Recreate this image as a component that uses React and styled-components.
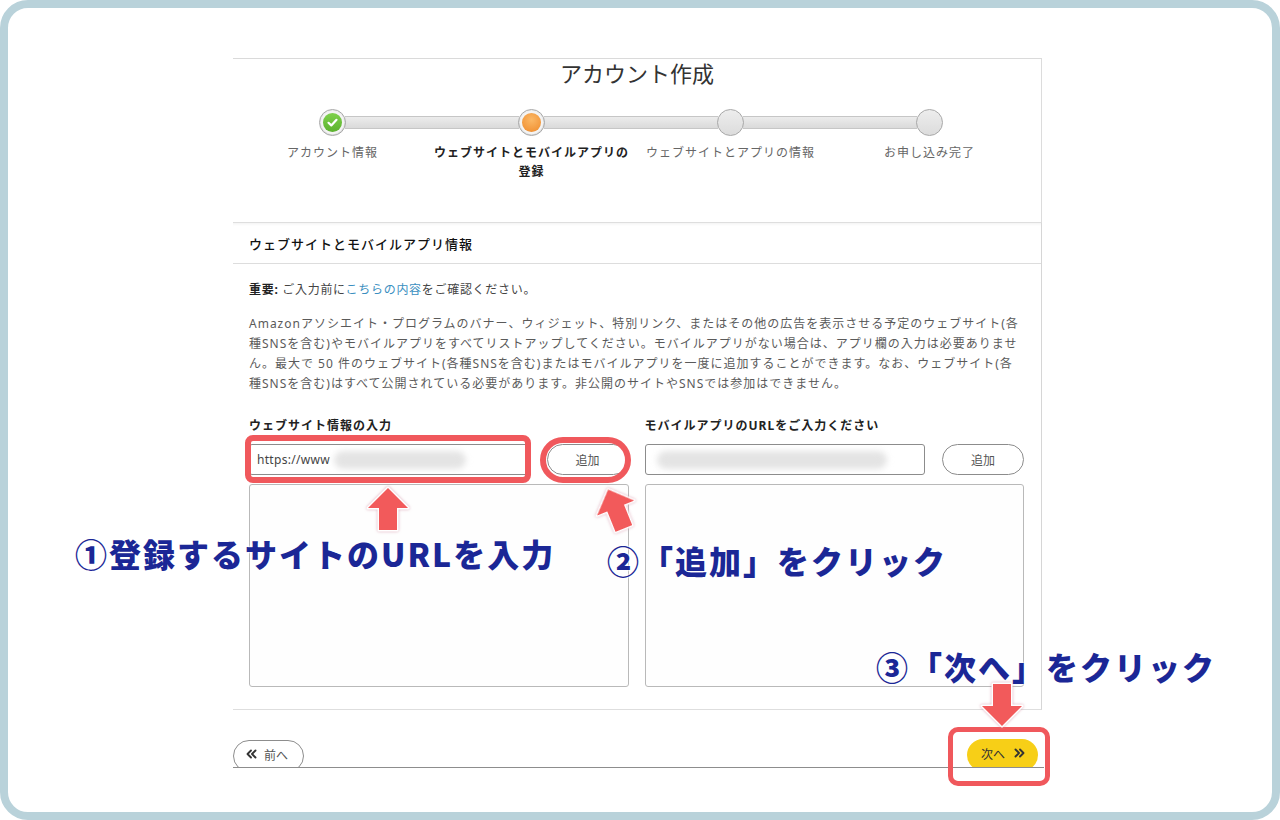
import React from "react";
import styled, { createGlobalStyle } from "styled-components";

const Global = createGlobalStyle`
  html, body { margin: 0; padding: 0; background: #fff; }
  body { font-family: "Noto Sans", "Noto Sans CJK JP", sans-serif; }
  * { box-sizing: border-box; }
`;

const Stage = styled.div`
  position: relative;
  width: 1280px;
  height: 820px;
  overflow: hidden;
`;

const Frame = styled.div`
  width: 1280px;
  height: 820px;
  border: 8px solid #b9d2da;
  border-radius: 28px;
  background: #fff;
  padding: 50px 0 0 225px;
`;

const Page = styled.div`
  width: 809px;
  background: #fff;
`;

const Top = styled.div`
  height: 164px;
  border-top: 1px solid #dadada;
  border-right: 1px solid #dcdcdc;
`;

const Title = styled.h1`
  margin: 0;
  text-align: center;
  font-size: 22px;
  line-height: 26px;
  font-weight: 400;
  color: #333;
  font-family: "Noto Sans CJK JP", sans-serif;
`;

const Stepper = styled.div`
  display: flex;
  align-items: center;
  height: 26px;
  margin-top: 24px;
  padding-left: 86px;
`;

const Circle = styled.span`
  flex: none;
  width: 27px;
  height: 27px;
  border-radius: 50%;
  border: 1px solid #a8a8a8;
  background: linear-gradient(#ededed, #dcdcdc);
  display: flex;
  align-items: center;
  justify-content: center;
  position: relative;
  z-index: 1;
`;

const Dot = styled.span`
  width: 19px;
  height: 19px;
  border-radius: 50%;
  background: ${(p) => p.$color};
  display: flex;
  align-items: center;
  justify-content: center;
  box-shadow: 0 0 0 2px #f4f4f4;
`;

const Track = styled.span`
  flex: none;
  width: 174px;
  height: 13px;
  margin: 0 -1px;
  background: linear-gradient(#ececec, #dadada);
  border-top: 1px solid #c6c6c6;
  border-bottom: 1px solid #c6c6c6;
`;

const Labels = styled.div`
  display: grid;
  grid-template-columns: repeat(4, 199px);
  margin-top: 8px;
  margin-left: 0;
`;

const StepLabel = styled.div`
  text-align: center;
  font-size: 12px;
  line-height: 19px;
  letter-spacing: 1px;
  color: ${(p) => (p.$active ? "#222" : "#666")};
  font-weight: ${(p) => (p.$active ? 700 : 400)};
`;

const Panel = styled.section`
  border-top: 1px solid #dedede;
  border-right: 1px solid #d6d6d6;
  border-bottom: 1px solid #dedede;
`;

const PanelHeader = styled.div`
  height: 41px;
  border-bottom: 1px solid #dddddd;
  display: flex;
  align-items: center;
  padding-left: 16px;
  font-size: 13px;
  letter-spacing: 1px;
  color: #111;
  font-weight: 500;
  box-shadow: inset 0 3px 3px -2px rgba(0, 0, 0, 0.06);
`;

const PanelBody = styled.div`
  padding: 16px 17px 22px 16px;
`;

const Notice = styled.p`
  margin: 0;
  font-size: 12px;
  line-height: 20px;
  letter-spacing: 0.7px;
  color: #444;
  white-space: nowrap;
`;

const Strong = styled.b`
  color: #222;
  font-weight: 700;
`;

const Link = styled.span`
  color: #3b8fbf;
`;

const Para = styled.p`
  margin: 14px 0 0;
  font-size: 12px;
  line-height: 20px;
  letter-spacing: 1px;
  color: #5a5a5a;
  white-space: nowrap;
`;

const Columns = styled.div`
  display: grid;
  grid-template-columns: 1fr 1fr;
  column-gap: 16px;
  margin-top: 22px;
`;

const Column = styled.div`
  display: flex;
  flex-direction: column;
`;

const FieldLabel = styled.div`
  font-size: 12px;
  line-height: 20px;
  font-weight: 700;
  letter-spacing: 1px;
  color: #222;
`;

const InputRow = styled.div`
  display: flex;
  gap: 17px;
  margin-top: 8px;
  height: 31px;
`;

const Input = styled.div`
  flex: 1;
  border: 1px solid #8c8c8c;
  border-radius: 3px;
  display: flex;
  align-items: center;
  padding-left: 7px;
  font-size: 12px;
  color: #444;
  letter-spacing: 0.3px;
  overflow: hidden;
`;

const Blur = styled.span`
  display: block;
  height: 18px;
  width: ${(p) => p.$w}px;
  margin-left: ${(p) => p.$ml}px;
  border-radius: 9px;
  background: #e4e4e4;
  filter: blur(3px);
`;

const AddButton = styled.button`
  flex: none;
  width: 82px;
  height: 31px;
  border: 1px solid #8c8c8c;
  border-radius: 16px;
  background: #fff;
  font-family: "Noto Sans CJK JP", sans-serif;
  font-size: 12px;
  color: #555;
  padding: 0;
`;

const ListBox = styled.div`
  margin-top: 9px;
  height: 203px;
  border: 1px solid #b9b9b9;
  border-radius: 3px;
  background: #fefefe;
`;

const Footer = styled.div`
  height: 58px;
  margin-right: -2px;
  border-bottom: 1px solid #8d8d8d;
  overflow: hidden;
  display: flex;
  justify-content: space-between;
  align-items: flex-start;
  padding: 30px 6px 0 0;
`;

const PrevButton = styled.button`
  width: 71px;
  height: 32px;
  border: 1px solid #8d8d8d;
  border-radius: 16px;
  background: #fff;
  display: flex;
  align-items: center;
  gap: 7px;
  padding: 0 0 4px 12px;
  font-family: "Noto Sans CJK JP", sans-serif;
  font-size: 12px;
  color: #555;
`;

const NextButton = styled.button`
  width: 71px;
  height: 32px;
  margin-top: -1px;
  border: none;
  border-radius: 16px;
  background: #f7cf17;
  display: flex;
  align-items: center;
  gap: 9px;
  padding: 0 0 4px 14px;
  font-family: "Noto Sans CJK JP", sans-serif;
  font-size: 12px;
  color: #333;
`;

const RedBox = styled.div`
  position: absolute;
  left: ${(p) => p.$x}px;
  top: ${(p) => p.$y}px;
  width: ${(p) => p.$w}px;
  height: ${(p) => p.$h}px;
  border: ${(p) => p.$b}px solid #f0585c;
  border-radius: ${(p) => p.$r}px;
`;

const ArrowSvg = styled.svg`
  position: absolute;
  left: ${(p) => p.$x}px;
  top: ${(p) => p.$y}px;
  transform: rotate(${(p) => p.$rot}deg);
  overflow: visible;
  filter: drop-shadow(0 0 1.5px rgba(210, 140, 160, 0.7));
`;

const Note = styled.div`
  position: absolute;
  left: ${(p) => p.$x}px;
  top: ${(p) => p.$y}px;
  font-family: "Noto Sans CJK JP", sans-serif;
  font-size: 32px;
  line-height: 40px;
  font-weight: 900;
  letter-spacing: 2px;
  color: #1b2796;
  white-space: nowrap;
  text-shadow: 0 0 2px #fff, 0 0 2px #fff, 0 0 3px #fff;
`;

const Arrow = ({ x, y, rot }) => (
  <ArrowSvg $x={x} $y={y} $rot={rot} width="44" height="46" viewBox="0 0 44 46">
    <path
      d="M22 2 L42 22 L31 22 L31 44 L13 44 L13 22 L2 22 Z"
      fill="#f25a5b"
      stroke="#fff"
      strokeWidth="3"
      strokeLinejoin="round"
      paintOrder="stroke"
    />
  </ArrowSvg>
);

const DoubleChevron = ({ dir = "left", color = "#333" }) => (
  <svg width="11" height="10" viewBox="0 0 11 10">
    <g fill="none" stroke={color} strokeWidth="1.9" strokeLinecap="round" strokeLinejoin="round"
      transform={dir === "right" ? "translate(11 0) scale(-1 1)" : undefined}>
      <path d="M5 1.5 L1.5 5 L5 8.5" />
      <path d="M9.5 1.5 L6 5 L9.5 8.5" />
    </g>
  </svg>
);

const Check = () => (
  <svg width="13" height="13" viewBox="0 0 13 13">
    <path d="M2.5 6.8 L5.3 9.4 L10.5 3.8" fill="none" stroke="#fff" strokeWidth="2.2"
      strokeLinecap="round" strokeLinejoin="round" />
  </svg>
);

export default function App() {
  return (
    <Stage>
      <Global />
      <Frame>
        <Page>
          <Top>
            <Title>アカウント作成</Title>
            <Stepper>
              <Circle>
                <Dot $color="linear-gradient(#7fd14c, #5cb22e)">
                  <Check />
                </Dot>
              </Circle>
              <Track />
              <Circle>
                <Dot $color="radial-gradient(circle at 50% 35%, #fbb866, #ef8a2a)" />
              </Circle>
              <Track />
              <Circle />
              <Track />
              <Circle />
            </Stepper>
            <Labels>
              <StepLabel>アカウント情報</StepLabel>
              <StepLabel $active>
                ウェブサイトとモバイルアプリの
                <br />
                登録
              </StepLabel>
              <StepLabel>ウェブサイトとアプリの情報</StepLabel>
              <StepLabel>お申し込み完了</StepLabel>
            </Labels>
          </Top>
          <Panel>
            <PanelHeader>ウェブサイトとモバイルアプリ情報</PanelHeader>
            <PanelBody>
              <Notice>
                <Strong>重要:</Strong> ご入力前に<Link>こちらの内容</Link>をご確認ください。
              </Notice>
              <Para>
                Amazonアソシエイト・プログラムのバナー、ウィジェット、特別リンク、またはその他の広告を表示させる予定のウェブサイト(各
                <br />
                種SNSを含む)やモバイルアプリをすべてリストアップしてください。モバイルアプリがない場合は、アプリ欄の入力は必要ありませ
                <br />
                ん。最大で 50 件のウェブサイト(各種SNSを含む)またはモバイルアプリを一度に追加することができます。なお、ウェブサイト(各
                <br />
                種SNSを含む)はすべて公開されている必要があります。非公開のサイトやSNSでは参加はできません。
              </Para>
              <Columns>
                <Column>
                  <FieldLabel>ウェブサイト情報の入力</FieldLabel>
                  <InputRow>
                    <Input>
                      https://www
                      <Blur $w={132} $ml={4} />
                    </Input>
                    <AddButton>追加</AddButton>
                  </InputRow>
                  <ListBox />
                </Column>
                <Column>
                  <FieldLabel>モバイルアプリのURLをご入力ください</FieldLabel>
                  <InputRow>
                    <Input>
                      <Blur $w={230} $ml={4} />
                    </Input>
                    <AddButton>追加</AddButton>
                  </InputRow>
                  <ListBox />
                </Column>
              </Columns>
            </PanelBody>
          </Panel>
          <Footer>
            <PrevButton>
              <DoubleChevron dir="left" />
              前へ
            </PrevButton>
            <NextButton>
              次へ
              <DoubleChevron dir="right" />
            </NextButton>
          </Footer>
        </Page>
      </Frame>

      <RedBox $x={245} $y={435} $w={286} $h={48} $b={6} $r={8} />
      <RedBox $x={540} $y={437} $w={91} $h={46} $b={6} $r={23} />
      <RedBox $x={948} $y={727} $w={102} $h={59} $b={5} $r={10} />

      <Arrow x={366} y={486} rot={0} />
      <Arrow x={594} y={486} rot={-22} />
      <Arrow x={980} y={682} rot={180} />

      <Note $x={75} $y={533}>①登録するサイトのURLを入力</Note>
      <Note $x={607} $y={540}>②「追加」をクリック</Note>
      <Note $x={876} $y={646}>③「次へ」をクリック</Note>
    </Stage>
  );
}
